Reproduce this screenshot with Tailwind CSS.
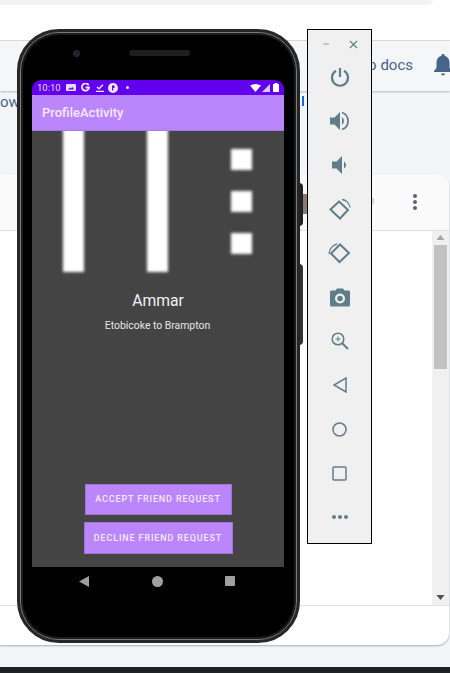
<!DOCTYPE html>
<html lang="en">
<head>
    <meta charset="UTF-8">
    <meta name="viewport" content="width=device-width, initial-scale=1.0">
    <title>ProfileActivity</title>
    <script src="https://cdn.jsdelivr.net/npm/@tailwindcss/browser@4"></script>
</head>
<body class="bg-white">
<div class="relative w-[450px] h-[673px] overflow-hidden bg-[#f4f5f8] font-['Roboto',sans-serif]">

    <!-- page behind the emulator -->
    <div class="h-[41px] bg-white border-b border-[#dcdcdc]">
        <div class="w-[433px] h-[5px] bg-[#f1f3f4] rounded-br-lg"></div>
    </div>
    <div class="h-[50px] bg-[#f5f6f8] shadow-[0_1px_2px_rgba(0,0,0,0.25)] flex items-center justify-end">
        <span class="text-[15px] text-[#47658c] mr-[20px] mb-[1px]">o docs</span>
        <svg class="w-[20px] h-[24px] mr-[-3px] mb-[2px]" viewBox="0 0 20 24" fill="#47658c"><path d="M10 1c-1 0-1.600.7-1.600 1.700C5.200 3.500 3.500 6.200 3.500 9.500V15L1 18v1h18v-1l-2.500-3V9.500c0-3.300-1.700-6-4.900-6.800C11.600 1.700 11 1 10 1zM8 20.500a2 2 0 0 0 4 0z"/></svg>
    </div>
    <div class="h-[83px] pt-[4px]">
        <span class="block text-[15px] leading-none text-[#47658c]">ow</span>
    </div>
    <div class="w-[449px] h-[471px] bg-white rounded-r-xl shadow-[0_1px_2px_rgba(0,0,0,0.3)] flex flex-col overflow-hidden">
        <div class="h-[57px] bg-[#fafafa] border-b border-[#e0e0e0] flex items-center justify-end pr-[32px] shrink-0">
            <div class="flex flex-col gap-[2px]">
                <span class="w-[4px] h-[4px] rounded-full bg-[#5f6368]"></span>
                <span class="w-[4px] h-[4px] rounded-full bg-[#5f6368]"></span>
                <span class="w-[4px] h-[4px] rounded-full bg-[#5f6368]"></span>
            </div>
        </div>
        <div class="h-[375px] flex justify-end border-b border-[#e0e0e0] shrink-0">
            <div class="w-[17px] bg-[#f0f0f0] flex flex-col items-center">
                <svg class="w-[17px] h-[14px] shrink-0" viewBox="0 0 17 14" fill="#a3a3a3"><path d="M8.500 4l4 5h-8z"/></svg>
                <div class="w-[13px] h-[124px] bg-[#c1c1c1]"></div>
                <div class="flex-1"></div>
                <svg class="w-[17px] h-[16px] shrink-0" viewBox="0 0 17 16" fill="#505050"><path d="M8.500 11l-4-5h8z"/></svg>
            </div>
        </div>
    </div>
    <div class="h-[22px]"></div>
    <div class="h-[6px] bg-[#202124]"></div>

    <!-- fragments of the page peeking out beside the phone -->
    <div class="absolute left-[302px] top-[96px] w-[2px] h-[10px] bg-[#1a66e8]"></div>
    <div class="absolute left-[303px] top-[194px] w-[4px] h-[20px] bg-[#8a7a70]"></div>
    <div class="absolute left-[372px] top-[198px] w-[2px] h-[6px] bg-[#bcd9f5]"></div>

    <!-- side buttons -->
    <div class="absolute left-[298px] top-[183px] w-[5px] h-[43px] bg-[#222] rounded-r-sm"></div>
    <div class="absolute left-[298px] top-[264px] w-[5px] h-[81px] bg-[#333] rounded-r-sm"></div>

    <!-- emulated phone -->
    <div class="absolute left-[17px] top-[29px] w-[283px] h-[614px] rounded-[42px] border-[3px] border-[#262626] bg-[#262626]">
        <div class="w-full h-full rounded-[39px] bg-black border border-[#7d7d7d] shadow-[inset_0_0_0_2px_#1c1c1c] flex flex-col items-start">
            <div class="h-[47px] w-full flex items-center pl-[52px] pb-[7px] shrink-0">
                <div class="w-[7px] h-[7px] rounded-full bg-[#1c2030] border border-[#2d3040]"></div>
                <div class="ml-[49px] w-[61px] h-[6px] rounded-full bg-[#1f1f1f]"></div>
            </div>
            <div class="w-[252px] h-[487px] ml-[11px] flex flex-col shrink-0">
                <!-- status bar -->
                <div class="h-[15px] bg-[#6200ee] rounded-t-[9px] flex items-center pl-[5px] pr-[5px] text-white shrink-0">
                    <span class="text-[9.500px] leading-none w-[29px] text-[#e8dcfb]">10:10</span>
                    <svg class="w-[10px] h-[8px]" viewBox="0 0 10 8" fill="#e8dcfb"><path d="M1 0h8a1 1 0 0 1 1 1v5a1 1 0 0 1-1 1H1a1 1 0 0 1-1-1V1a1 1 0 0 1 1-1zm1 5.500h6L6.500 3 5 4.500 4 3.500z" fill-rule="evenodd"/></svg>
                    <svg class="w-[9px] h-[9px] ml-[5px]" viewBox="0 0 10 10" fill="none" stroke="#f0e8fc" stroke-width="2"><path d="M8.500 2.500A4 4 0 1 0 9 5H5"/></svg>
                    <svg class="w-[8px] h-[8px] ml-[6px]" viewBox="0 0 8 8" fill="none" stroke="#f0e8fc" stroke-width="1.300"><path d="M1 3l2 1.800L7 .8M0 7.300h8"/></svg>
                    <svg class="w-[10px] h-[10px] ml-[4px]" viewBox="0 0 10 10"><circle cx="5" cy="5" r="5" fill="#f0e8fc"/><path d="M4 2.500h2.500v2.500H5.200v2.500H4z" fill="#6200ee"/></svg>
                    <span class="w-[3px] h-[3px] rounded-full bg-[#e8dcfb] ml-[8px]"></span>
                    <div class="flex-1"></div>
                    <svg class="w-[11px] h-[8px]" viewBox="0 0 11 8" fill="#fff"><path d="M0 1.500Q5.500-1.500 11 1.500L5.500 8z"/></svg>
                    <svg class="w-[8px] h-[8px] ml-[1px]" viewBox="0 0 8 8" fill="#d9c6f7"><path d="M8 0v8H0z"/></svg>
                    <svg class="w-[6px] h-[9px] ml-[3px]" viewBox="0 0 6 9" fill="#fff"><path d="M1.500 0h3v1H6v8H0V1h1.500z"/></svg>
                </div>
                <!-- app bar -->
                <div class="h-[36px] bg-[#bb86fc] border-b border-[#a679e0] flex items-center pl-[10px] shrink-0">
                    <span class="text-[13px] font-medium text-[#f3e9ff] leading-none">ProfileActivity</span>
                </div>
                <!-- profile content -->
                <div class="flex-1 bg-[#444444] flex flex-col items-center overflow-hidden">
                    <div class="w-full h-[141px] flex pl-[31px] shrink-0">
                        <div class="w-[21px] h-[141px] bg-white blur-[1.5px] mt-[-3px] pt-[3px] box-content"></div>
                        <div class="w-[21px] h-[141px] bg-white blur-[1.5px] mt-[-3px] pt-[3px] box-content ml-[63px]"></div>
                        <div class="flex flex-col gap-[21px] ml-[63px] pt-[18px]">
                            <div class="w-[21px] h-[21px] bg-white blur-[1.5px]"></div>
                            <div class="w-[21px] h-[21px] bg-white blur-[1.5px]"></div>
                            <div class="w-[21px] h-[21px] bg-white blur-[1.5px]"></div>
                        </div>
                    </div>
                    <div class="mt-[19px] text-[15.700px] leading-[19px] text-[#f2f2f2]">Ammar</div>
                    <div class="mt-[10px] mr-[1px] text-[10.400px] leading-[12px] text-[#e6e6e6]">Etobicoke to Brampton</div>
                    <div class="flex-1"></div>
                    <div class="w-[147px] h-[31px] pt-[1px] bg-[#bb86fc] border border-[#9f74d6] flex items-center justify-center text-[9px] font-medium tracking-[0.85px] text-[#f3e9ff]">ACCEPT FRIEND REQUEST</div>
                    <div class="w-[149px] h-[32px] pt-[1px] mt-[7px] mb-[13px] bg-[#bb86fc] border border-[#9f74d6] flex items-center justify-center text-[9px] font-medium tracking-[0.85px] text-[#f3e9ff]">DECLINE FRIEND REQUEST</div>
                </div>
            </div>
            <!-- android nav -->
            <div class="w-[252px] h-[28px] ml-[11px] flex items-center justify-between pl-[47px] pr-[49px] shrink-0">
                <svg class="w-[10px] h-[11px]" viewBox="0 0 10 11" fill="#a0a0a0"><path d="M10 0v11L0 5.500z"/></svg>
                <div class="w-[11px] h-[11px] rounded-full bg-[#a0a0a0]"></div>
                <div class="w-[10px] h-[10px] rounded-[1px] bg-[#a0a0a0]"></div>
            </div>
        </div>
    </div>

    <!-- emulator toolbar -->
    <div class="absolute left-[307px] top-[29px] w-[65px] h-[515px] bg-[#f0f0f0] border border-black flex flex-col items-center">
        <div class="w-full h-[25px] pt-[3px] flex items-center justify-between pl-[14px] pr-[13px] shrink-0">
            <svg class="w-[8px] h-[8px]" viewBox="0 0 8 8" stroke="#90a4ae" stroke-width="1"><path d="M1 4h6"/></svg>
            <svg class="w-[9px] h-[9px]" viewBox="0 0 9 9" stroke="#607d8b" stroke-width="1.100"><path d="M1 1l7 7M8 1L1 8"/></svg>
        </div>
        <div class="w-full grid grid-cols-1 auto-rows-[44px] place-items-center">
            <!-- power -->
            <svg class="w-[20px] h-[20px]" viewBox="0 0 20 20" fill="none" stroke="#607d8b" stroke-width="2.200"><path d="M6 3.800a8 8 0 1 0 8 0M10 1v9"/></svg>
            <!-- volume up -->
            <svg class="w-[20px] h-[20px]" viewBox="0 0 20 20" fill="#607d8b"><path d="M0 6.500h4.500L10 1v18l-5.500-5.500H0z"/><path d="M12 6a5 5 0 0 1 0 8z"/><path d="M12 1.500a9 9 0 0 1 0 17" fill="none" stroke="#607d8b" stroke-width="1.800"/></svg>
            <!-- volume down -->
            <svg class="w-[20px] h-[20px]" viewBox="0 0 20 20" fill="#607d8b"><path d="M2 6.500h4.500L12 1v18l-5.500-5.500H2z"/><path d="M14 6.500a4 4 0 0 1 0 7z"/></svg>
            <!-- rotate left -->
            <svg class="w-[23px] h-[23px]" viewBox="0 0 23 23" fill="none" stroke="#607d8b" stroke-width="2"><path d="M11 3.500l9 8.500-8 8.500-9.500-9z"/><path d="M14 1.500a9 9 0 0 1 8 8" stroke-width="1.300"/></svg>
            <!-- rotate right -->
            <svg class="w-[23px] h-[23px]" viewBox="0 0 23 23" fill="none" stroke="#607d8b" stroke-width="2"><path d="M12 2.500l9 8.500-9.500 9L3 11.500z"/><path d="M1 12a11 11 0 0 1 8-10" stroke-width="1.300"/></svg>
            <!-- camera -->
            <svg class="w-[20px] h-[19px]" viewBox="0 0 20 19" fill="#607d8b"><path d="M1.500 2.500h4L7 .5h6l1.500 2h4A1.500 1.500 0 0 1 20 4v13a1.500 1.500 0 0 1-1.500 1.500h-17A1.500 1.500 0 0 1 0 17V4a1.500 1.500 0 0 1 1.500-1.500zM10 5.500a5 5 0 1 0 0 10 5 5 0 0 0 0-10zm0 2.200a2.800 2.800 0 1 1 0 5.600 2.800 2.800 0 0 1 0-5.600z" fill-rule="evenodd"/></svg>
            <!-- zoom -->
            <svg class="w-[18px] h-[18px]" viewBox="0 0 18 18" fill="none" stroke="#607d8b" stroke-width="1.500"><circle cx="7" cy="7" r="5.800"/><path d="M11 11l6 6" stroke-width="2"/><path d="M7 4.500v5M4.500 7h5" stroke-width="1"/></svg>
            <!-- back -->
            <svg class="w-[14px] h-[16px]" viewBox="0 0 14 16" fill="none" stroke="#607d8b" stroke-width="1.500"><path d="M13 1v14L1 8z"/></svg>
            <!-- home -->
            <svg class="w-[15px] h-[15px]" viewBox="0 0 15 15" fill="none" stroke="#607d8b" stroke-width="1.500"><circle cx="7.500" cy="7.500" r="6.500"/></svg>
            <!-- overview -->
            <svg class="w-[15px] h-[15px]" viewBox="0 0 15 15" fill="none" stroke="#607d8b" stroke-width="1.500"><rect x="1" y="1" width="13" height="13" rx="1"/></svg>
            <!-- more -->
            <svg class="w-[16px] h-[4px]" viewBox="0 0 16 4" fill="#607d8b"><circle cx="2" cy="2" r="2"/><circle cx="8" cy="2" r="2"/><circle cx="14" cy="2" r="2"/></svg>
        </div>
    </div>
</div>
</body>
</html>
